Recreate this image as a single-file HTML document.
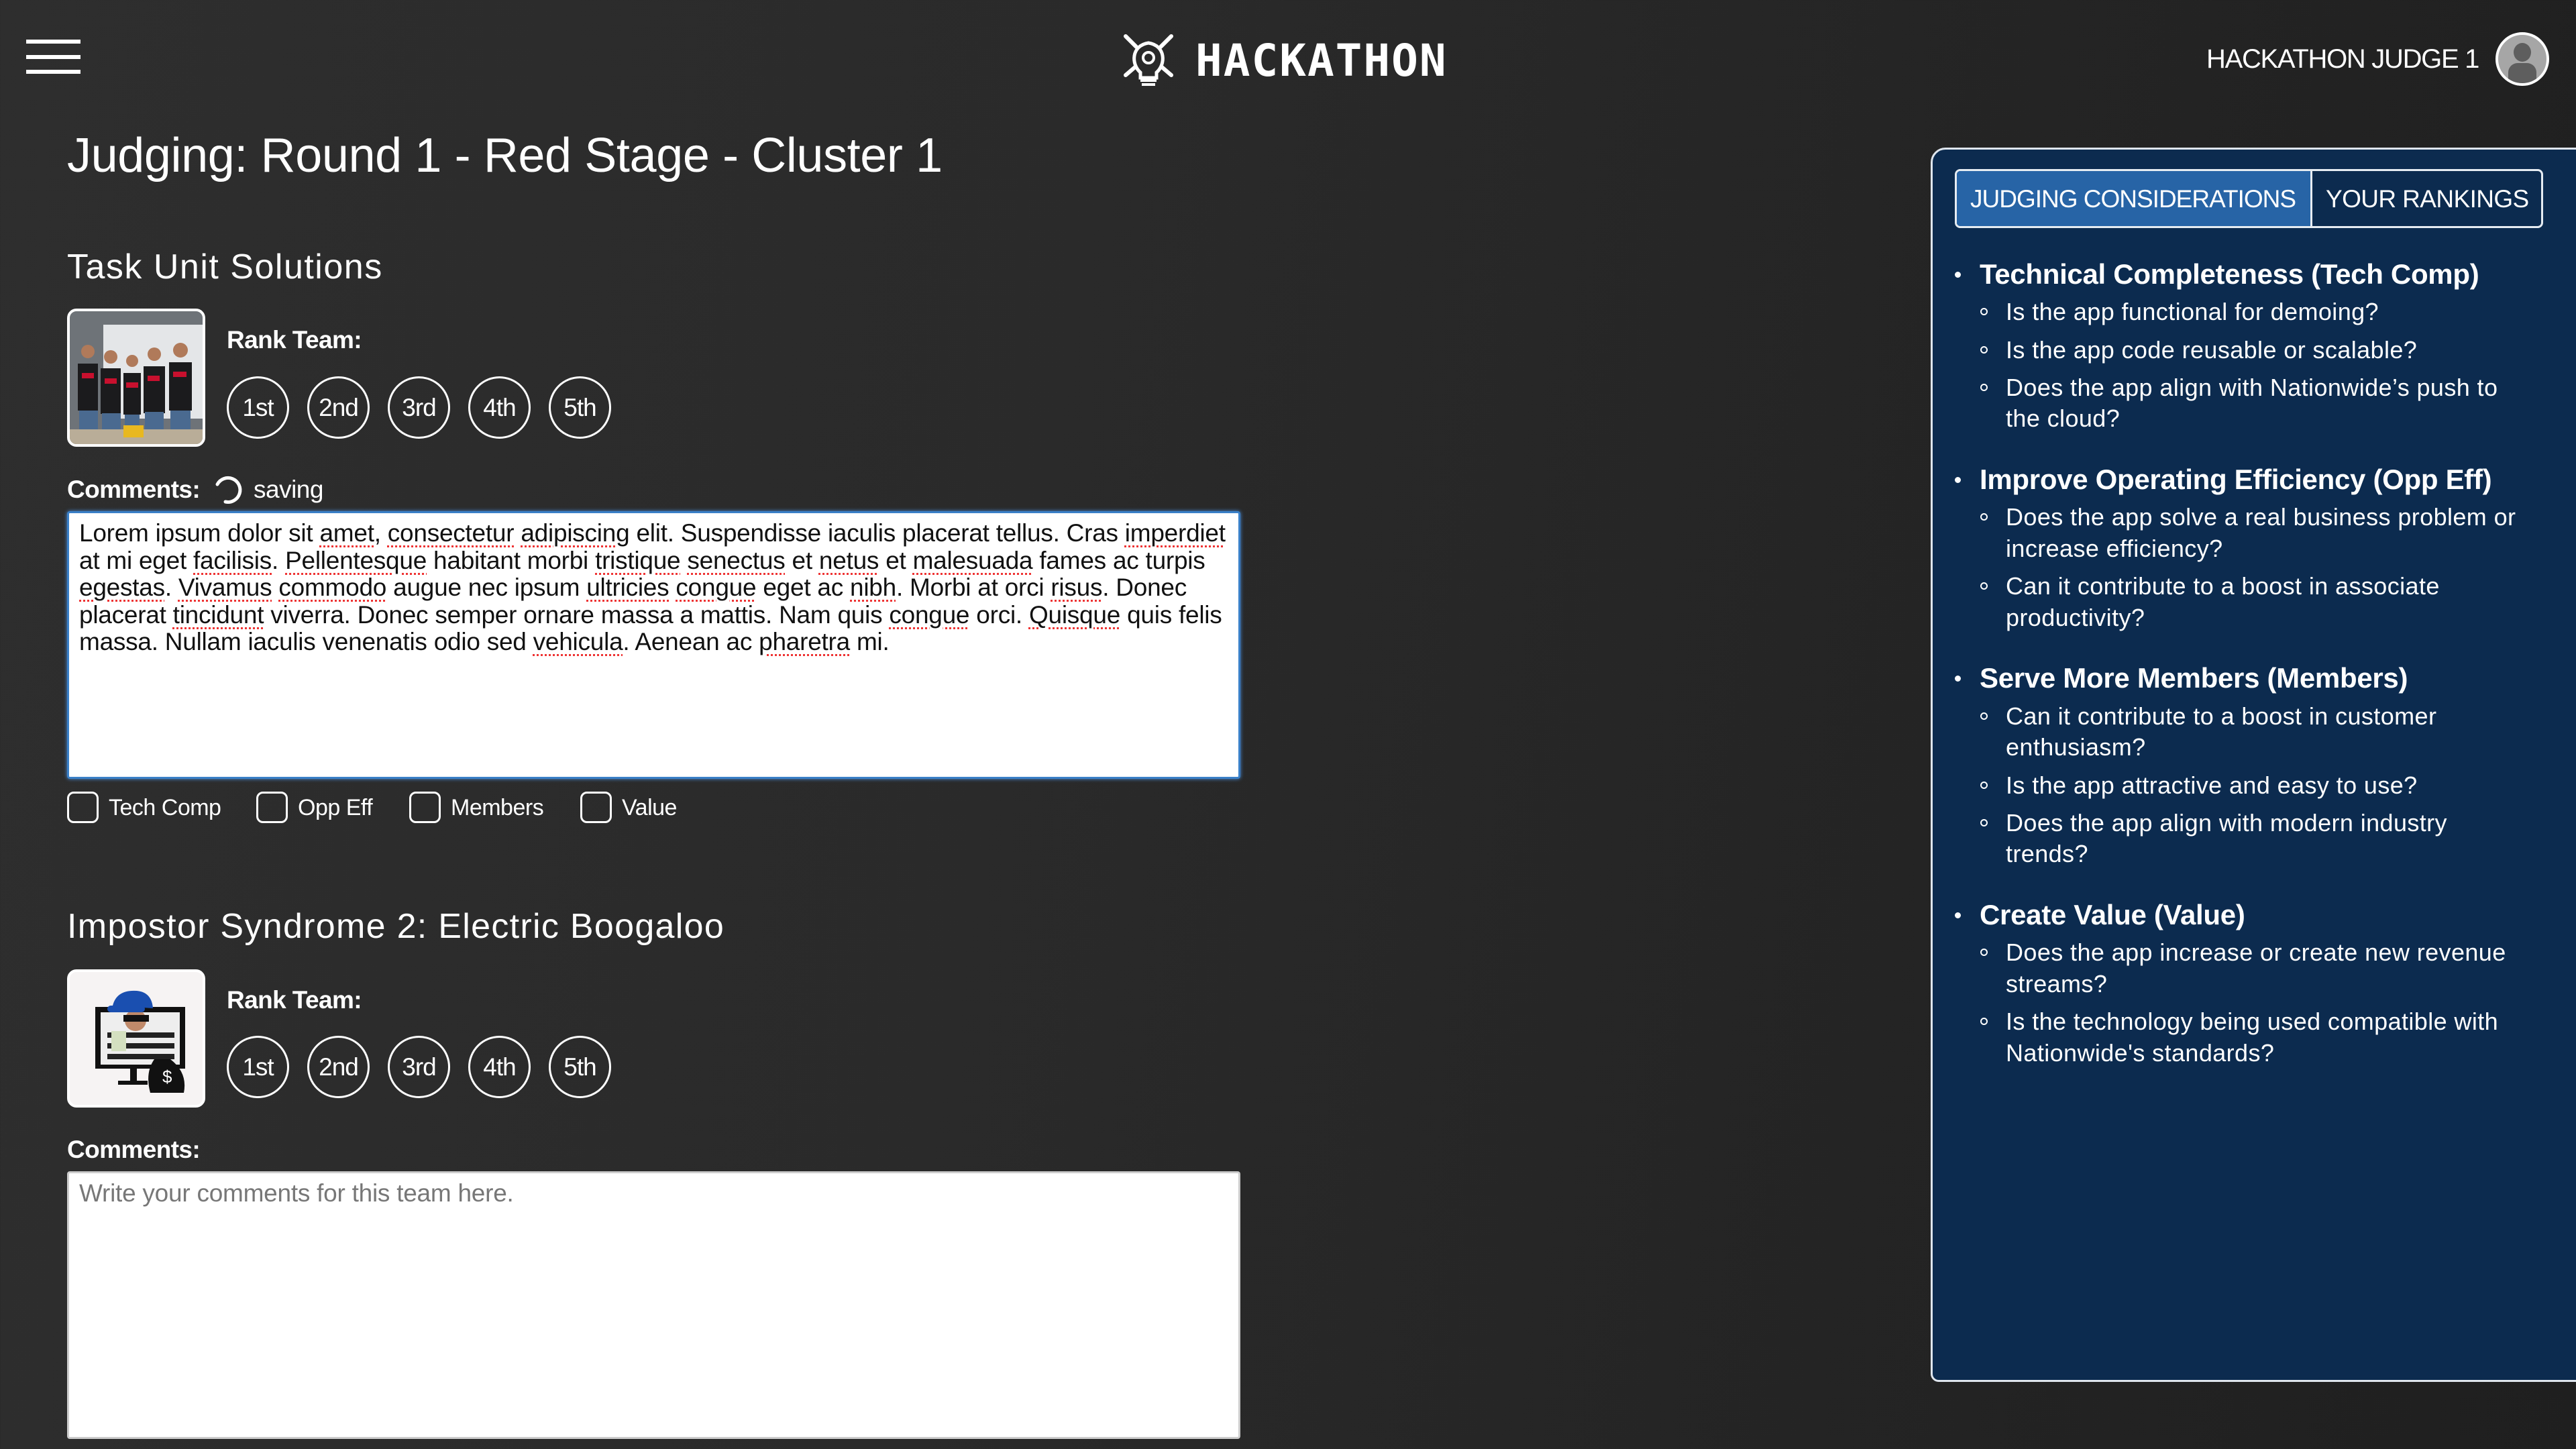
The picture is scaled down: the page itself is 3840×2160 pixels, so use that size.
<!DOCTYPE html>
<html><head><meta charset="utf-8"><style>
*{margin:0;padding:0;box-sizing:border-box}
body{width:3840px;height:2160px;overflow:hidden;position:relative;font-family:"Liberation Sans",sans-serif;color:#fff;
background:linear-gradient(100deg,#2e2e2e 0%,#2a2a2a 40%,#1f1f1f 100%);}
.a{position:absolute;white-space:nowrap}
.c{position:absolute;width:93px;height:93px;border:3px solid #fff;border-radius:50%;display:flex;align-items:center;justify-content:center;font-size:37px;letter-spacing:-1px}
.ta{position:absolute;background:#fff;border-radius:4px;color:#111;font-size:37px;letter-spacing:-0.25px;line-height:40.5px;padding:10px 15px;overflow:hidden}
.cb{position:absolute;width:47px;height:47px;border:3px solid #fff;border-radius:10px}
.cl{position:absolute;font-size:34px;letter-spacing:-0.5px;line-height:40px}
.p{position:absolute;left:2990px;font-size:36px;line-height:46px;white-space:nowrap;letter-spacing:0.4px}
.h{position:absolute;left:2951px;font-size:42px;font-weight:bold;line-height:50px;white-space:nowrap;letter-spacing:-0.3px}
.d{position:absolute;width:11px;height:11px;border:2px solid #fff;border-radius:50%;left:2952px}
.bd{position:absolute;width:9px;height:9px;background:#fff;border-radius:50%;left:2914px}
u{text-decoration:underline dotted #e33;text-underline-offset:6px;text-decoration-thickness:3px}
</style></head><body>
<div class="a" style="left:39px;top:59px;width:81px;height:6px;background:#fff"></div>
<div class="a" style="left:39px;top:82px;width:81px;height:6px;background:#fff"></div>
<div class="a" style="left:39px;top:104px;width:81px;height:6px;background:#fff"></div>
<svg class="a" style="left:1672px;top:48px" width="80" height="82" viewBox="0 0 80 82">
<g stroke="#fff" stroke-width="6" fill="none" stroke-linecap="round">
<line x1="6" y1="6" x2="22" y2="22"/><line x1="74" y1="6" x2="58" y2="22"/>
<line x1="6" y1="64" x2="20" y2="52"/><line x1="74" y1="64" x2="60" y2="52"/>
<path d="M28 60 C14 48 14 20 40 16 C66 20 66 48 52 60 L52 68 L28 68 Z" stroke-width="5"/>
<circle cx="40" cy="38" r="8" stroke-width="4"/>
</g>
<rect x="28" y="70" width="24" height="4" fill="#fff"/><rect x="30" y="76" width="20" height="4" fill="#fff"/>
</svg>
<div class="a" style="left:1782px;top:58px;font-size:66px;font-weight:bold;letter-spacing:2px;line-height:66px;font-family:'DejaVu Sans Mono','Liberation Mono',monospace">HACKATHON</div>
<div class="a" style="left:3289px;top:64px;font-size:40px;line-height:48px;letter-spacing:-1.3px">HACKATHON JUDGE 1</div>
<div class="a" style="left:3720px;top:48px;width:80px;height:80px;border-radius:50%;border:4px solid #fff;background:#a6a6a6;overflow:hidden">
<div class="a" style="left:23px;top:12px;width:26px;height:28px;border-radius:50%;background:#5e5e5e"></div>
<div class="a" style="left:15px;top:42px;width:42px;height:40px;border-radius:14px 14px 0 0;background:#5e5e5e"></div></div>

<div class="a" style="left:100px;top:190px;font-size:72px;line-height:84px;letter-spacing:-0.4px">Judging: Round 1 - Red Stage - Cluster 1</div>

<div class="a" style="left:100px;top:368px;font-size:52px;line-height:60px;letter-spacing:1.5px">Task Unit Solutions</div>
<div class="a" style="left:100px;top:460px;width:206px;height:206px;border:4px solid #fff;border-radius:14px;overflow:hidden;background:#6e7378">
<svg width="198" height="198" viewBox="0 0 198 198"><rect x="50" y="20" width="148" height="140" fill="#e4e6e8"/>
<g fill="#1b1b1d"><rect x="12" y="78" width="30" height="70"/><rect x="46" y="85" width="30" height="68"/><rect x="80" y="92" width="26" height="62"/><rect x="110" y="82" width="32" height="70"/><rect x="148" y="76" width="34" height="72"/></g>
<g fill="#b07a5a"><circle cx="27" cy="60" r="10"/><circle cx="61" cy="68" r="10"/><circle cx="93" cy="74" r="9"/><circle cx="126" cy="64" r="10"/><circle cx="165" cy="58" r="11"/></g>
<g fill="#c8102e"><rect x="18" y="92" width="18" height="8"/><rect x="52" y="100" width="18" height="8"/><rect x="84" y="106" width="18" height="8"/><rect x="116" y="96" width="18" height="8"/><rect x="154" y="90" width="20" height="8"/></g>
<g fill="#4a6a90"><rect x="14" y="148" width="28" height="36"/><rect x="48" y="152" width="28" height="32"/><rect x="82" y="154" width="22" height="30"/><rect x="112" y="150" width="28" height="34"/><rect x="150" y="148" width="30" height="36"/></g>
<rect x="0" y="176" width="198" height="22" fill="#b9ad98"/><rect x="80" y="170" width="30" height="18" fill="#e8b820"/></svg></div>
<div class="a" style="left:338px;top:485px;font-size:37px;line-height:44px;font-weight:bold;letter-spacing:-0.6px">Rank Team:</div>
<div class="c" style="left:338px;top:561px">1st</div><div class="c" style="left:458px;top:561px">2nd</div><div class="c" style="left:578px;top:561px">3rd</div><div class="c" style="left:698px;top:561px">4th</div><div class="c" style="left:818px;top:561px">5th</div>
<div class="a" style="left:100px;top:708px;font-size:37px;line-height:44px;font-weight:bold;letter-spacing:-0.6px">Comments:</div>
<svg class="a" style="left:316px;top:706px" width="48" height="48" viewBox="0 0 48 48"><path d="M8 16 A18 18 0 1 1 20 42" stroke="#fff" stroke-width="5" fill="none" stroke-linecap="round"/></svg>
<div class="a" style="left:378px;top:708px;font-size:37px;line-height:44px;letter-spacing:-0.5px">saving</div>
<div class="ta" style="left:100px;top:762px;width:1749px;height:399px;border:3px solid #3a80c8;box-shadow:0 0 6px #4a90e0">
<div style="white-space:nowrap">Lorem ipsum dolor sit <u>amet</u>, <u>consectetur</u> <u>adipiscing</u> elit. Suspendisse iaculis placerat tellus. Cras <u>imperdiet</u></div>
<div style="white-space:nowrap">at mi eget <u>facilisis</u>. <u>Pellentesque</u> habitant morbi <u>tristique</u> <u>senectus</u> et <u>netus</u> et <u>malesuada</u> fames ac turpis</div>
<div style="white-space:nowrap"><u>egestas</u>. <u>Vivamus</u> <u>commodo</u> augue nec ipsum <u>ultricies</u> <u>congue</u> eget ac <u>nibh</u>. Morbi at orci <u>risus</u>. Donec</div>
<div style="white-space:nowrap">placerat <u>tincidunt</u> viverra. Donec semper ornare massa a mattis. Nam quis <u>congue</u> orci. <u>Quisque</u> quis felis</div>
<div style="white-space:nowrap">massa. Nullam iaculis venenatis odio sed <u>vehicula</u>. Aenean ac <u>pharetra</u> mi.</div></div>
<div class="cb" style="left:100px;top:1180px"></div><div class="cl" style="left:162px;top:1184px">Tech Comp</div>
<div class="cb" style="left:382px;top:1180px"></div><div class="cl" style="left:444px;top:1184px">Opp Eff</div>
<div class="cb" style="left:610px;top:1180px"></div><div class="cl" style="left:672px;top:1184px">Members</div>
<div class="cb" style="left:865px;top:1180px"></div><div class="cl" style="left:927px;top:1184px">Value</div>

<div class="a" style="left:100px;top:1351px;font-size:52px;line-height:60px;letter-spacing:1.3px">Impostor Syndrome 2: Electric Boogaloo</div>
<div class="a" style="left:100px;top:1445px;width:206px;height:206px;border:4px solid #fff;border-radius:14px;overflow:hidden;background:#f6f3f3">
<svg width="198" height="198" viewBox="0 0 198 198"><rect x="38" y="52" width="134" height="92" fill="#111"/><rect x="46" y="60" width="118" height="78" fill="#eee"/>
<g fill="#222"><rect x="56" y="90" width="100" height="8"/><rect x="56" y="106" width="100" height="8"/><rect x="56" y="122" width="100" height="8"/></g>
<circle cx="98" cy="72" r="16" fill="#c08a6a"/><rect x="80" y="64" width="38" height="10" fill="#111"/>
<path d="M64 50 Q70 26 100 28 Q122 30 124 54 Z" fill="#1a4fb0"/><rect x="56" y="50" width="56" height="10" rx="5" fill="#1a4fb0"/>
<rect x="62" y="88" width="22" height="30" fill="#d4e0c0"/>
<rect x="90" y="144" width="10" height="20" fill="#111"/><rect x="72" y="162" width="44" height="6" fill="#111"/>
<path d="M126 130 Q112 150 120 180 L170 180 Q176 150 150 130 Z" fill="#111"/>
<text x="138" y="165" font-size="26" fill="#fff" font-family="Liberation Sans">$</text></svg></div>
<div class="a" style="left:338px;top:1469px;font-size:37px;line-height:44px;font-weight:bold;letter-spacing:-0.6px">Rank Team:</div>
<div class="c" style="left:338px;top:1544px">1st</div><div class="c" style="left:458px;top:1544px">2nd</div><div class="c" style="left:578px;top:1544px">3rd</div><div class="c" style="left:698px;top:1544px">4th</div><div class="c" style="left:818px;top:1544px">5th</div>
<div class="a" style="left:100px;top:1692px;font-size:37px;line-height:44px;font-weight:bold;letter-spacing:-0.6px">Comments:</div>
<div class="ta" style="left:100px;top:1746px;width:1749px;height:399px;border:3px solid #ccc;color:#777">Write your comments for this team here.</div>

<div class="a" style="left:2878px;top:220px;width:980px;height:1840px;background:#0c2b4f;border:3px solid #dfe6ee;border-radius:22px 0 0 12px"></div>
<div class="a" style="left:2914px;top:252px;width:877px;height:88px;border:3px solid #e6ecf2;border-radius:8px;overflow:hidden;background:#0c2b4f">
<div class="a" style="left:0;top:0;width:530px;height:82px;background:#2764a6;border-right:3px solid #e6ecf2"></div>
<div class="a" style="left:20px;top:20px;font-size:37px;line-height:44px;letter-spacing:-1px">JUDGING CONSIDERATIONS</div>
<div class="a" style="left:550px;top:20px;font-size:37px;line-height:44px;letter-spacing:-0.6px">YOUR RANKINGS</div></div>

<div class="bd" style="top:405px"></div><div class="h" style="top:384px">Technical Completeness (Tech Comp)</div>
<div class="d" style="top:459px"></div><div class="p" style="top:442px">Is the app functional for demoing?</div>
<div class="d" style="top:516px"></div><div class="p" style="top:499px">Is the app code reusable or scalable?</div>
<div class="d" style="top:572px"></div><div class="p" style="top:555px">Does the app align with Nationwide’s push to</div>
<div class="p" style="top:601px">the cloud?</div>

<div class="bd" style="top:711px"></div><div class="h" style="top:690px">Improve Operating Efficiency (Opp Eff)</div>
<div class="d" style="top:765px"></div><div class="p" style="top:748px">Does the app solve a real business problem or</div>
<div class="p" style="top:795px">increase efficiency?</div>
<div class="d" style="top:868px"></div><div class="p" style="top:851px">Can it contribute to a boost in associate</div>
<div class="p" style="top:898px">productivity?</div>

<div class="bd" style="top:1007px"></div><div class="h" style="top:986px">Serve More Members (Members)</div>
<div class="d" style="top:1062px"></div><div class="p" style="top:1045px">Can it contribute to a boost in customer</div>
<div class="p" style="top:1091px">enthusiasm?</div>
<div class="d" style="top:1165px"></div><div class="p" style="top:1148px">Is the app attractive and easy to use?</div>
<div class="d" style="top:1221px"></div><div class="p" style="top:1204px">Does the app align with modern industry</div>
<div class="p" style="top:1250px">trends?</div>

<div class="bd" style="top:1360px"></div><div class="h" style="top:1339px">Create Value (Value)</div>
<div class="d" style="top:1414px"></div><div class="p" style="top:1397px">Does the app increase or create new revenue</div>
<div class="p" style="top:1444px">streams?</div>
<div class="d" style="top:1517px"></div><div class="p" style="top:1500px">Is the technology being used compatible with</div>
<div class="p" style="top:1547px">Nationwide's standards?</div>
</body></html>
